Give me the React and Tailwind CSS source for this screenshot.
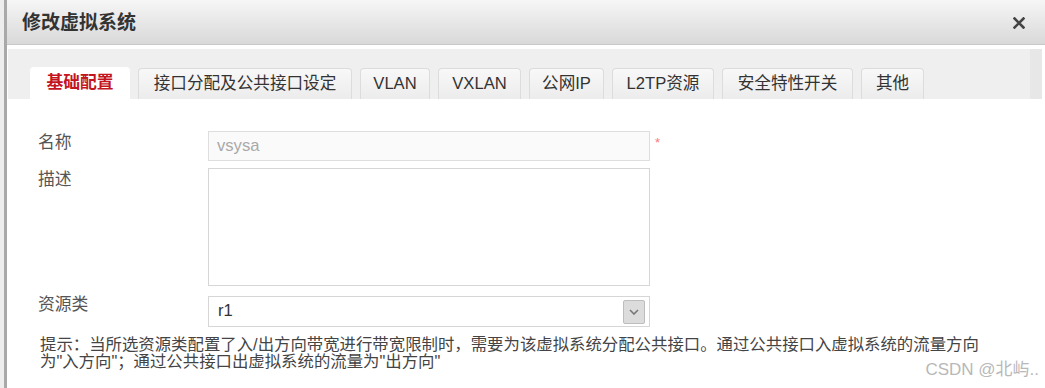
import React from "react";

const font = { fontFamily: '"Liberation Sans", "Noto Sans CJK SC", sans-serif' };

const tabs = [
  { label: "基础配置", w: "w-[100px]", active: true },
  { label: "接口分配及公共接口设定", w: "w-[214px]" },
  { label: "VLAN", w: "w-[70px]" },
  { label: "VXLAN", w: "w-[83px]" },
  { label: "公网IP", w: "w-[75px]" },
  { label: "L2TP资源", w: "w-[102px]" },
  { label: "安全特性开关", w: "w-[131px]" },
  { label: "其他", w: "w-[63px]" },
];

const App = () => {
  return (
    <div className="relative flex w-[1045px] h-[388px] overflow-hidden bg-white text-[#333]" style={font}>
      {/* left edge of the window */}
      <div className="w-[4px] h-full bg-[#ededed]" />
      <div className="flex flex-col flex-1 border-l-[3px] border-[#a9a9a9]">
        {/* header */}
        <div className="flex items-center justify-between h-[45px] pl-[15px] pr-[20px] bg-gradient-to-b from-[#f6f6f6] to-[#d9d9d9] border-b border-[#c8c8c8]">
          <span className="text-[19px] font-bold text-[#333] leading-none">修改虚拟系统</span>
          <svg width="12" height="12" viewBox="0 0 12 12" className="mt-[1px]">
            <path d="M1.5 1.5 L10.5 10.5 M10.5 1.5 L1.5 10.5" stroke="#444" strokeWidth="2.6" strokeLinecap="square" />
          </svg>
        </div>

        {/* tab bar */}
        <div className="flex items-end gap-[8px] h-[50px] mt-[4px] ml-[1px] mr-[3px] pl-[22px] bg-[#efefef] border-r-[12px] border-[#e7e7e7]">
          {tabs.map((t) =>
            t.active ? (
              <div
                key={t.label}
                className={`${t.w} h-[32px] flex items-center justify-center bg-white rounded-t-[4px] text-[16.8px] font-bold text-[#c4141e]`}
              >
                {t.label}
              </div>
            ) : (
              <div
                key={t.label}
                className={`${t.w} h-[31px] flex items-center justify-center rounded-t-[4px] border border-b-0 border-[#dcdcdc] bg-gradient-to-b from-[#f8f8f8] to-[#ececec] text-[16.6px] text-[#333]`}
              >
                {t.label}
              </div>
            )
          )}
        </div>

        {/* form */}
        <div className="flex flex-col pl-[31px] pt-[32px]">
          <div className="flex">
            <div className="w-[170px] pt-[3px] text-[16.8px] leading-[17px] text-[#555]">名称</div>
            <div className="w-[442px] h-[30px] flex items-center px-[8px] bg-[#fafafa] border border-[#dedede] text-[16.6px] text-[#a9a9a9]">
              vsysa
            </div>
            <span className="ml-[5px] mt-[5px] text-[13px] leading-none text-[#f77]">*</span>
          </div>

          <div className="flex mt-[7px]">
            <div className="w-[170px] pt-[3px] text-[16.8px] leading-[17px] text-[#555]">描述</div>
            <div className="w-[442px] h-[118px] bg-white border border-[#d6d6d6]" />
          </div>

          <div className="flex mt-[10px]">
            <div className="w-[170px] text-[16.8px] leading-[17px] text-[#555]">资源类</div>
            <div className="w-[442px] h-[31px] flex items-center justify-between pl-[9px] pr-[4px] bg-white border border-[#d6d6d6]">
              <span className="text-[16.6px] text-[#333]">r1</span>
              <div className="w-[22px] h-[24px] flex items-center justify-center bg-[#dcdcdc] border border-[#bdbdbd] rounded-[2px]">
                <svg width="10" height="6" viewBox="0 0 10 6">
                  <path d="M1 1 L5 5 L9 1" fill="none" stroke="#777" strokeWidth="1.6" />
                </svg>
              </div>
            </div>
          </div>

          <div className="mt-[9px] pl-[2px] text-[16.4px] leading-[17px] text-[#444] whitespace-nowrap">
            提示：当所选资源类配置了入/出方向带宽进行带宽限制时，需要为该虚拟系统分配公共接口。通过公共接口入虚拟系统的流量方向
            <br />
            为"入方向"；通过公共接口出虚拟系统的流量为"出方向"
          </div>
        </div>
      </div>

      {/* watermark */}
      <div className="absolute right-[6px] bottom-[10px] text-[17px] text-[#b8b8b8] leading-none">CSDN @北屿..</div>
    </div>
  );
};

export default App;
